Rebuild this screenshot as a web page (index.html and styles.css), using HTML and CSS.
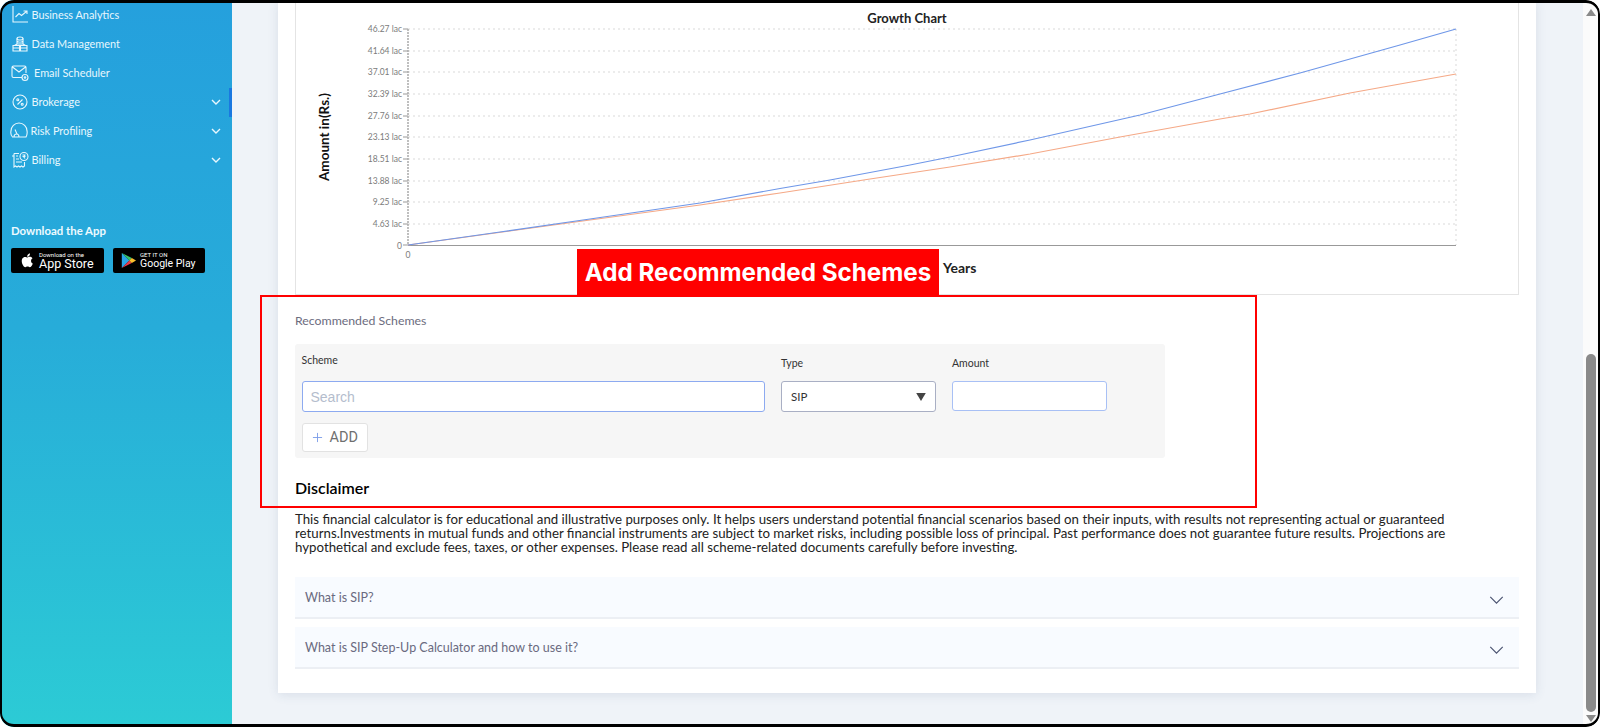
FILE: index.html
```html
<!DOCTYPE html>
<html lang="en">
<head>
<meta charset="utf-8">
<title>SIP Step-Up Calculator</title>
<link rel="stylesheet" href="styles.css">
</head>
<body>
<div class="app">
  <aside class="sidebar">
    <nav class="nav">
      <a class="nav-item"><svg class="nav-icon" viewBox="0 0 18 18"><path d="M2 0v16h15M4.500 11l3.500-3.500 2.500 2L15.500 5.500M12.500 5h3.500v3"/></svg><span>Business Analytics</span></a>
      <a class="nav-item"><svg class="nav-icon" viewBox="0 0 18 18"><ellipse cx="9" cy="3.500" rx="3" ry="1.500"/><path d="M6 3.500v5.500h6V3.500M6 6.200c1.500 1 4.500 1 6 0M2 10.500h6.500V16H2zM9.500 10.500H16V16H9.500zM2 13h6.500M9.500 13H16M3.500 10.500 6 9M14.500 10.500 12 9"/></svg><span>Data Management</span></a>
      <a class="nav-item nav-item-wide"><svg class="nav-icon" viewBox="0 0 18 18"><path d="M11 13.500H2.500A1.500 1.500 0 0 1 1 12V3.500A1.500 1.500 0 0 1 2.500 2h11A1.500 1.500 0 0 1 15 3.500V9M1.500 3l6.500 5 6.500-5"/><circle cx="14" cy="13.500" r="3"/><circle cx="14" cy="13.500" r=".8"/></svg><span>Email Scheduler</span></a>
      <a class="nav-item"><svg class="nav-icon" viewBox="0 0 18 18"><circle cx="9" cy="9" r="7"/><path d="M11.500 6.500l-5 5"/><circle cx="6.800" cy="6.800" r="1"/><circle cx="11.200" cy="11.200" r="1"/></svg><span>Brokerage</span><svg class="nav-chevron" viewBox="0 0 10 6"><path d="M1 1l4 4 4-4"/></svg></a>
      <a class="nav-item nav-item-risk"><svg class="nav-icon" viewBox="0 0 18 18"><path d="M2.500 15H16c1-2 1.500-4 1-6a8 8 0 0 0-16 0c-.5 2-.2 4 1.500 6zM4 15c0-2 1-3 2.500-3S9 13 9 15M7 12 5 7.500"/></svg><span>Risk Profiling</span><svg class="nav-chevron" viewBox="0 0 10 6"><path d="M1 1l4 4 4-4"/></svg></a>
      <a class="nav-item"><svg class="nav-icon" viewBox="0 0 18 18"><path d="M3 2.500V16l1.500-1 1.500 1 1.500-1 1.500 1 1.500-1 1.500 1 1.500-1V11M3 2.500h5M1 5h2M5 5h2M5 8h3M5 11h6"/><circle cx="13" cy="5.500" r="4"/><path d="M11.500 4h3M11.500 5.500h3M12.500 4c1.500 0 1.500 1.500 0 1.500l1.500 2"/></svg><span>Billing</span><svg class="nav-chevron" viewBox="0 0 10 6"><path d="M1 1l4 4 4-4"/></svg></a>
    </nav>
    <div class="download">
      <h3 class="download-title">Download the App</h3>
      <div class="badges">
        <div class="badge badge-apple">
          <svg class="badge-icon" viewBox="0 0 18 20"><path fill="#fff" d="M13.200 10.500c0-2.100 1.700-3.100 1.800-3.200-1-1.400-2.500-1.600-3-1.700-1.300-.1-2.500.8-3.100.8-.7 0-1.700-.8-2.700-.7-1.400 0-2.700.8-3.400 2-1.500 2.500-.4 6.200 1 8.200.7 1 1.500 2.100 2.600 2.100 1 0 1.400-.7 2.700-.7s1.600.7 2.700.7 1.800-1 2.500-2c.8-1.200 1.100-2.300 1.100-2.300s-2.200-.9-2.200-3.200zM11.100 4.300c.6-.7 1-1.700.9-2.700-.9 0-1.900.6-2.500 1.300-.5.600-1 1.600-.9 2.600 1 .1 1.900-.5 2.500-1.200z"/></svg>
          <div class="badge-text"><span class="badge-small">Download on the</span><span class="badge-big badge-big-apple">App Store</span></div>
        </div>
        <div class="badge badge-google">
          <svg class="badge-icon" viewBox="0 0 18 20"><path fill="#2aa5e8" d="M1 1v18l9-9z"/><path fill="#35c26b" d="M1 1l9 9 3-3z"/><path fill="#e8394a" d="M1 19l9-9 3 3z"/><path fill="#fbc02d" d="M13 7l5 3-5 3-3-3z"/></svg>
          <div class="badge-text"><span class="badge-small">GET IT ON</span><span class="badge-big">Google Play</span></div>
        </div>
      </div>
    </div>
    <span class="nav-active"></span>
  </aside>

  <main class="main">
    <section class="card">
      <div class="chart-box">
        <svg class="chart" viewBox="296 0 1222 294" aria-label="Growth Chart">
          <text class="chart-title" x="907" y="23" text-anchor="middle">Growth Chart</text>
          <text class="chart-ylabel" transform="translate(329 137) rotate(-90)" text-anchor="middle">Amount in(Rs.)</text>
          <g class="grid">
            <path d="M408 29H1456M408 51H1456M408 72H1456M408 94H1456M408 116H1456M408 137H1456M408 159H1456M408 181H1456M408 202H1456M408 224H1456M1456 29V245"/>
          </g>
          <path class="ticks" d="M403 29h5M403 51h5M403 72h5M403 94h5M403 116h5M403 137h5M403 159h5M403 181h5M403 202h5M403 224h5M403 245h5"/>
          <path class="axis-y" d="M408 29V245"/>
          <path class="axis-x" d="M408 245.500H1456"/>
          <g class="ytick" text-anchor="end">
            <text x="402" y="32">46.27 lac</text>
            <text x="402" y="54">41.64 lac</text>
            <text x="402" y="75">37.01 lac</text>
            <text x="402" y="97">32.39 lac</text>
            <text x="402" y="119">27.76 lac</text>
            <text x="402" y="140">23.13 lac</text>
            <text x="402" y="162">18.51 lac</text>
            <text x="402" y="184">13.88 lac</text>
            <text x="402" y="205">9.25 lac</text>
            <text x="402" y="227">4.63 lac</text>
            <text x="402" y="249">0</text>
          </g>
          <text class="ytick" x="408" y="258" text-anchor="middle">0</text>
          <polyline class="line-orange" points="408,245 590,220 700,205 780,193 870,179 950,167 1030,154 1120,137 1220,119 1250,114 1350,93 1400,84 1456,74"/>
          <polyline class="line-blue" points="408,245 500,232 590,219 700,203 780,188.500 830,180 910,165 950,157 1030,140 1140,115 1220,94 1300,73 1400,45 1456,29"/>
          <text class="chart-xlabel" x="943" y="273">Years</text>
        </svg>
      </div>

      <h4 class="section-label">Recommended Schemes</h4>
      <div class="scheme-panel">
        <div class="scheme-row">
          <div class="field field-scheme">
            <label class="field-label">Scheme</label>
            <input class="input input-search" type="text" placeholder="Search">
          </div>
          <div class="field field-small">
            <label class="field-label">Type</label>
            <div class="select"><span>SIP</span><svg class="select-arrow" viewBox="0 0 12 10"><path d="M0 0h12L6 10z"/></svg></div>
          </div>
          <div class="field field-small">
            <label class="field-label">Amount</label>
            <input class="input input-amount" type="text">
          </div>
        </div>
        <button class="add-btn" type="button"><svg class="add-icon" viewBox="0 0 12 12"><path d="M6 1v10M1 6h10"/></svg>ADD</button>
      </div>

      <h2 class="disclaimer-title">Disclaimer</h2>
      <p class="disclaimer">This financial calculator is for educational and illustrative purposes only. It helps users understand potential financial scenarios based on their inputs, with results not representing actual or guaranteed returns.Investments in mutual funds and other financial instruments are subject to market risks, including possible loss of principal. Past performance does not guarantee future results. Projections are hypothetical and exclude fees, taxes, or other expenses. Please read all scheme-related documents carefully before investing.</p>

      <div class="accordion">
        <div class="acc-item"><span>What is SIP?</span><svg class="acc-chevron" viewBox="0 0 16 9"><path d="M1 1l7 7 7-7"/></svg></div>
        <div class="acc-item"><span>What is SIP Step-Up Calculator and how to use it?</span><svg class="acc-chevron" viewBox="0 0 16 9"><path d="M1 1l7 7 7-7"/></svg></div>
      </div>
    </section>
  </main>

  <div class="scrollbar">
    <svg class="sb-arrow" viewBox="0 0 10 7"><path d="M5 0l5 7H0z"/></svg>
    <div class="sb-track"><div class="sb-thumb"></div></div>
    <svg class="sb-arrow" viewBox="0 0 10 7"><path d="M0 0h10L5 7z"/></svg>
  </div>

  <div class="annot-box"></div>
  <div class="annot-label">Add Recommended Schemes</div>
  <div class="frame"></div>
</div>
</body>
</html>
```
FILE: styles.css
```css
* { box-sizing: border-box; }
html, body { margin: 0; padding: 0; height: 100%; background: #fff; overflow: hidden; }
body { font-family: Lato, "Open Sans", sans-serif; }

.app {
  position: relative;
  display: flex;
  width: 1600px;
  height: 727px;
  overflow: hidden;
  border-radius: 14px;
  background: #eff3f8;
}
.frame {
  position: absolute;
  inset: 0;
  border: solid #000;
  border-width: 3px 2px 3px 2px;
  border-radius: 14px;
  pointer-events: none;
}

/* sidebar */
.sidebar {
  position: relative;
  flex: 0 0 232px;
  display: flex;
  flex-direction: column;
  background: linear-gradient(180deg, #25a0dd 0%, #27acd9 45%, #2ccbd5 100%);
  color: #fff;
}
.nav { display: flex; flex-direction: column; }
.nav-item {
  display: flex;
  align-items: center;
  height: 29px;
  padding: 0 8px 0 11px;
  font-size: 10.900px;
  color: #e8f7fd;
}
.nav-icon {
  flex: 0 0 18px;
  width: 18px;
  height: 18px;
  margin-right: 2.500px;
  fill: none;
  stroke: #e8f7fd;
  stroke-width: 1.1;
}
.nav-item-wide .nav-icon { margin-right: 5px; }
.nav-item-risk { padding-left: 10px; }
.nav-chevron {
  width: 10px;
  height: 6px;
  margin-left: auto;
  margin-right: 3px;
  fill: none;
  stroke: #e8f7fd;
  stroke-width: 1.4;
}
.nav-active {
  position: absolute;
  right: 0;
  top: 88px;
  width: 3px;
  height: 29px;
  background: #1a78e0;
}
.download { margin-top: 49px; padding-left: 11px; }
.download-title { margin: 0 0 9px; font-size: 11.400px; font-weight: 700; line-height: 16px; color: #eefaff; }
.badges { display: flex; gap: 9px; }
.badge {
  display: flex;
  align-items: center;
  height: 25px;
  background: #000;
  border-radius: 2px;
  color: #fff;
}
.badge-apple { width: 93px; padding-left: 9px; }
.badge-google { width: 92px; padding-left: 8px; }
.badge-icon { flex: 0 0 15px; width: 15px; height: 17px; margin-right: 4px; }
.badge-text { display: flex; flex-direction: column; font-family: Roboto, sans-serif; }
.badge-small { font-size: 6px; line-height: 7px; white-space: nowrap; }
.badge-big { font-size: 10.500px; line-height: 12px; white-space: nowrap; }
.badge-big-apple { font-size: 12.500px; }

/* main */
.main { flex: 1 1 auto; min-width: 0; padding: 0 47px 0 46px; }
.card {
  background: #fff;
  padding: 0 17px 24px;
  box-shadow: 0 2px 10px rgba(60, 80, 120, .12);
}
.chart-box {
  height: 295px;
  border: solid #e4e4e4;
  border-width: 0 1px 1px 1px;
}
.chart { display: block; width: 1222px; height: 294px; }
.chart-title { font-size: 13px; font-weight: 700; fill: #222; }
.chart-ylabel { font-size: 13.500px; font-weight: 700; fill: #111; }
.chart-xlabel { font-size: 14px; font-weight: 700; fill: #222; }
.grid path { fill: none; stroke: #d9d9d9; stroke-width: 1; stroke-dasharray: 2 3; }
.ticks { fill: none; stroke: #999; stroke-width: 1; }
.axis-y { fill: none; stroke: #aaa; stroke-width: 1.500; stroke-dasharray: 2 1; }
.axis-x { fill: none; stroke: #999; stroke-width: 1; }
.ytick { font-size: 8.500px; fill: #7b7b7b; }
.line-blue, .line-orange { fill: none; stroke-width: 1.200; }
.line-blue { stroke: #6f97e8; }
.line-orange { stroke: #f5a987; }

.section-label { margin: 18px 0 15px; font-size: 12.300px; line-height: 16px; font-weight: 400; color: #6c6c7e; }
.scheme-panel { width: 870px; height: 114px; padding: 0 7px 0 6.500px; background: #f6f6f6; border-radius: 3px; }
.scheme-row { display: flex; gap: 16px; }
.field { display: flex; flex-direction: column; }
.field-scheme { flex: 0 0 463.500px; padding-top: 9px; }
.field-small { flex: 0 0 155px; padding-top: 12px; }
.field-label { height: 14px; font-size: 10.500px; line-height: 14px; color: #333; }
.field-scheme .field-label { margin-bottom: 14px; }
.field-small .field-label { margin-bottom: 11px; }
.input {
  display: block;
  width: 100%;
  padding: 0 8px;
  background: #fff;
  border: 1px solid #8daaf0;
  border-radius: 3px;
  outline: none;
}
.input-search { height: 31px; font-family: "Liberation Sans", sans-serif; font-size: 14px; }
.input-search::placeholder { color: #b4bdcd; }
.input-amount { height: 30px; border-color: #a8c0f5; }
.select {
  display: flex;
  align-items: center;
  justify-content: space-between;
  height: 31px;
  padding: 0 9px 0 9px;
  background: #fff;
  border: 1px solid #a9afc4;
  border-radius: 3px;
  font-size: 11.500px;
  color: #333;
}
.select-arrow { width: 10px; height: 8px; fill: #444; }
.add-btn {
  display: flex;
  align-items: center;
  height: 29px;
  width: 66px;
  margin-top: 11px;
  padding: 0 0 0 9px;
  background: #fff;
  border: 1px solid #e2e2e2;
  border-radius: 3px;
  font-family: Roboto, sans-serif;
  font-size: 14.500px;
  color: #6f6f6f;
}
.add-icon { width: 11px; height: 11px; margin-right: 7px; fill: none; stroke: #7c9ce8; stroke-width: 1; }

.disclaimer-title { margin: 20px 0 14px; font-size: 16px; line-height: 20px; font-weight: 600; color: #000; }
.disclaimer { margin: 0; width: 1175px; font-size: 13.280px; line-height: 14.200px; color: #222; }
.accordion { display: flex; flex-direction: column; gap: 8px; margin-top: 22px; }
.acc-item {
  display: flex;
  align-items: center;
  justify-content: space-between;
  height: 42px;
  padding: 1px 15px 0 10px;
  background: #f8fbff;
  border-bottom: 2px solid #eceff4;
  font-size: 12.500px;
  color: #6a6a80;
}
.acc-chevron { width: 15px; height: 8px; margin-top: 5px; fill: none; stroke: #4a5270; stroke-width: 1.300; }

/* scrollbar */
.scrollbar {
  flex: 0 0 17px;
  display: flex;
  flex-direction: column;
  align-items: center;
  padding: 9px 2px 5px 0;
  background: #fbfbfb;
}
.sb-arrow { flex: 0 0 7px; width: 10px; height: 7px; fill: #8a8a8a; }
.sb-track { flex: 1 1 auto; width: 10px; padding: 338px 0 3px; }
.sb-thumb { height: 100%; background: #8a8a8a; border-radius: 5px; }

/* annotations */
.annot-box {
  position: absolute;
  left: 260px;
  top: 295px;
  width: 997px;
  height: 213px;
  border: 2px solid #f00;
  pointer-events: none;
}
.annot-label {
  position: absolute;
  left: 577px;
  top: 249px;
  width: 362px;
  height: 47px;
  background: #f00;
  color: #fff;
  font-family: Inter, Roboto, sans-serif;
  font-weight: 700;
  font-size: 24.200px;
  line-height: 47px;
  text-align: center;
  white-space: nowrap;
}
```
